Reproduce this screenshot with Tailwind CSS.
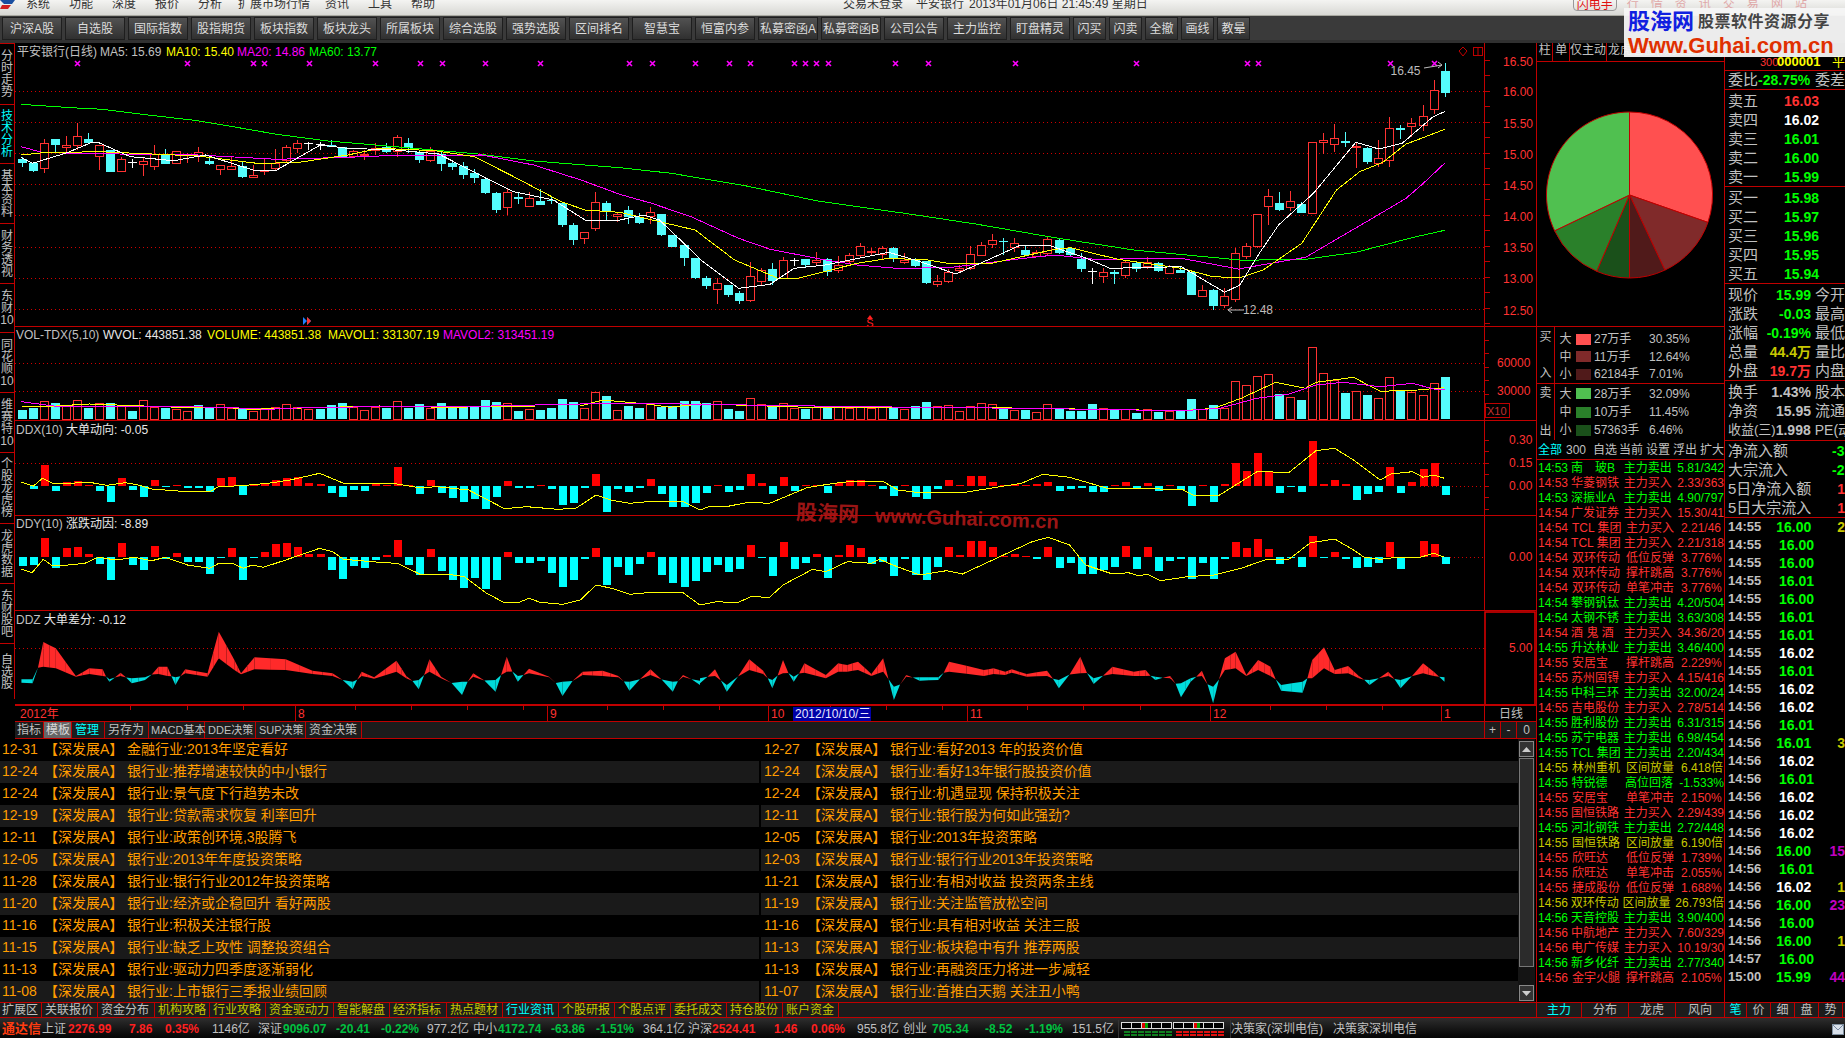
<!DOCTYPE html>
<html lang="zh">
<head>
  <meta charset="UTF-8" />
  <title>平安银行 日线</title>
  <script src="https://cdn.jsdelivr.net/npm/@tailwindcss/browser@4"></script>
</head>
<body class="bg-black">
<div class="relative w-[1845px] h-[1038px] overflow-hidden bg-black flex flex-col text-[12px] leading-[14px] text-[#c0c0c0] [font-family:'Liberation_Sans','Noto_Sans_CJK_SC',sans-serif]">

  <!-- title bar -->
  <div class="h-[16px] shrink-0 overflow-hidden bg-gradient-to-b from-[#f4f4f2] to-[#d8d8d4] text-[#333] flex items-start border-b border-[#a8a8a0]">
    <svg width="16" height="10" class="shrink-0"><path d="M0 0h15l-3 4H4z" fill="#1a4fa0"/><path d="M2 5h9l-3 4H0z" fill="#d02020"/></svg>
    <div class="flex -mt-[3px] pl-[10px]">
      <span class="w-[43px]">系统</span><span class="w-[43px]">功能</span><span class="w-[43px]">深度</span><span class="w-[43px]">报价</span><span class="w-[40px]">分析</span><span class="w-[87px]">扩展市场行情</span><span class="w-[43px]">资讯</span><span class="w-[43px]">工具</span><span class="w-[43px]">帮助</span>
    </div>
    <div class="flex -mt-[3px] ml-[389px]">
      <span class="w-[73px]">交易未登录</span><span class="w-[53px]">平安银行</span><span>2013年01月06日 21:45:49 星期日</span>
    </div>
    <div class="ml-[425px] -mt-[3px] w-[44px] h-[14px] border border-[#999] rounded-b-[4px] text-[#e01010] text-center text-[12px]">闪电手</div>
    <div class="flex -mt-[3px] ml-[10px] gap-[12px] text-[#e0a8a8]"><span>行</span><span>情</span><span>资</span><span>讯</span><span>交</span><span>易</span><span>网</span><span>站</span></div>
  </div>

  <!-- toolbar -->
  <div id="toolbar" class="h-[27px] shrink-0 bg-[#3a3a3a] flex items-start pt-[1px] pl-[2px] gap-[3px] border-b-[3px] border-[#303030]"></div>

  <div class="flex flex-1 min-h-0">
    <div class="w-[1536px] shrink-0 flex flex-col">
      <div class="flex h-[696px] shrink-0">
        <!-- left vertical tabs -->
        <div id="sideTabs" class="w-[15px] shrink-0 flex flex-col"></div>
        <!-- chart stack -->
        <div class="w-[1521px] flex flex-col">
          <div class="relative h-[284px] border-b border-[#c00000] overflow-hidden">
            <svg id="pMain" class="block" width="1521" height="284" viewBox="15 43 1521 284"></svg>
            <div class="absolute left-[2px] top-[2px] flex">
              <span class="w-[83px]">平安银行(日线)</span><span class="w-[66px]">MA5: 15.69</span><span class="w-[71px] text-[#ffff00]">MA10: 15.40</span><span class="w-[72px] text-[#ff00ff]">MA20: 14.86</span><span class="text-[#00ff00]">MA60: 13.77</span>
            </div>
          </div>
          <div class="relative h-[94px] border-b border-[#c00000] overflow-hidden">
            <svg id="pVol" class="block" width="1521" height="94" viewBox="15 327 1521 94"></svg>
            <div class="absolute left-[1px] top-[1px] flex">
              <span class="w-[87px]">VOL-TDX(5,10)</span><span class="w-[104px] text-[#e8e8e8]">WVOL: 443851.38</span><span class="w-[121px] text-[#ffff00]">VOLUME: 443851.38</span><span class="w-[115px] text-[#ffff00]">MAVOL1: 331307.19</span><span class="text-[#ff00ff]">MAVOL2: 313451.19</span>
            </div>
          </div>
          <div class="relative h-[95px] border-b border-[#c00000] overflow-hidden">
            <svg id="pDdx" class="block" width="1521" height="95" viewBox="15 421 1521 95"></svg>
            <div class="absolute left-[1px] top-[2px]"><span>DDX(10)</span> <span class="text-[#e8e8e8]">大单动向: -0.05</span></div>
          </div>
          <div class="relative h-[95px] border-b border-[#c00000] overflow-hidden">
            <svg id="pDdy" class="block" width="1521" height="95" viewBox="15 516 1521 95"></svg>
            <div class="absolute left-[1px] top-[1px]"><span>DDY(10)</span> <span class="text-[#e8e8e8]">涨跌动因: -8.89</span></div>
          </div>
          <div class="relative h-[95px] border-b-2 border-[#c00000] overflow-hidden">
            <svg id="pDdz" class="block" width="1521" height="95" viewBox="15 611 1521 95"></svg>
            <div class="absolute left-[1px] top-[2px]"><span>DDZ</span> <span class="text-[#e8e8e8]">大单差分: -0.12</span></div>
          </div>
          <div class="h-[16px] border-b border-[#c00000] overflow-hidden">
            <svg id="pAxis" class="block" width="1521" height="16" viewBox="15 707 1521 16"></svg>
          </div>
          <!-- template tabs -->
          <div class="h-[17px] bg-[#1c1c1c] border-b border-[#c00000] flex items-stretch">
            <span class="w-[29px] pl-[2px] pt-[1px] border-r border-[#c00000]">指标</span>
            <span class="w-[28px] pl-[2px] pt-[1px] bg-[#666] text-[#d8d8d8] border-r border-[#c00000]">模板</span>
            <span class="w-[33px] pl-[3px] pt-[1px] text-[#00ffff] border-r border-[#c00000]">管理</span>
            <span class="w-[44px] pl-[3px] pt-[1px] border-r border-[#c00000]">另存为</span>
            <span class="w-[56px] pl-[2px] pt-[1px] border-r border-[#c00000] whitespace-nowrap text-[11px]">MACD基本</span>
            <span class="w-[51px] pl-[3px] pt-[1px] border-r border-[#c00000] whitespace-nowrap text-[11px]">DDE决策</span>
            <span class="w-[50px] pl-[3px] pt-[1px] border-r border-[#c00000] whitespace-nowrap text-[11px]">SUP决策</span>
            <span class="w-[56px] pl-[3px] pt-[1px] border-r border-[#c00000]">资金决策</span>
            <span class="flex-1 border-r border-[#c00000]"></span>
            <span class="w-[16px] text-center pt-[1px] border-r border-[#c00000]">+</span>
            <span class="w-[16px] text-center pt-[1px] border-r border-[#c00000]">-</span>
            <span class="w-[19px] text-center pt-[1px]">0</span>
          </div>
        </div>
      </div>

      <!-- news -->
      <div class="h-[263px] shrink-0 flex overflow-hidden">
        <div id="news" class="w-[1518px] shrink-0 flex flex-col text-[14px] text-[#ff9c00]"></div>
        <div class="w-[17px] flex flex-col items-center pt-[2px] bg-[#141414]">
          <div class="w-[15px] h-[16px] bg-[#333] border border-[#888] flex items-center justify-center"><svg width="9" height="5"><path d="M4.5 0L9 5H0z" fill="#ccc"/></svg></div>
          <div class="w-[15px] h-[209px] mt-[1px] bg-[#2b2b2b] border border-[#777]"></div>
          <div class="flex-1"></div>
          <div class="w-[15px] h-[16px] mb-[1px] bg-[#333] border border-[#888] flex items-center justify-center"><svg width="9" height="5"><path d="M0 0H9L4.5 5z" fill="#ccc"/></svg></div>
        </div>
      </div>

      <!-- bottom tabs -->
      <div class="h-[16px] shrink-0 bg-[#1c1c1c] border-t border-b border-[#c00000] flex items-stretch overflow-hidden">
        <span class="w-[42px] pl-[2px] border-r border-[#c00000]">扩展区</span>
        <span class="w-[56px] pl-[3px] border-r border-[#c00000]">关联报价</span>
        <span class="w-[57px] pl-[3px] border-r border-[#c00000]">资金分布</span>
        <span class="w-[55px] pl-[3px] text-[#c8c800] border-r border-[#c00000]">机构攻略</span>
        <span class="w-[56px] pl-[3px] text-[#c8c800] border-r border-[#c00000]">行业攻略</span>
        <span class="w-[68px] pl-[3px] text-[#c8c800] border-r border-[#c00000]">资金驱动力</span>
        <span class="w-[56px] pl-[3px] text-[#c8c800] border-r border-[#c00000]">智能解盘</span>
        <span class="w-[57px] pl-[3px] text-[#c8c800] border-r border-[#c00000]">经济指标</span>
        <span class="w-[56px] pl-[3px] text-[#c8c800] border-r border-[#c00000]">热点题材</span>
        <span class="w-[56px] pl-[3px] text-[#00ffff] border-r border-[#c00000]">行业资讯</span>
        <span class="w-[56px] pl-[3px] text-[#c8c800] border-r border-[#c00000]">个股研报</span>
        <span class="w-[56px] pl-[3px] text-[#c8c800] border-r border-[#c00000]">个股点评</span>
        <span class="w-[56px] pl-[3px] text-[#c8c800] border-r border-[#c00000]">委托成交</span>
        <span class="w-[56px] pl-[3px] text-[#c8c800] border-r border-[#c00000]">持仓股份</span>
        <span class="w-[56px] pl-[3px] text-[#c8c800] border-r border-[#c00000]">账户资金</span>
      </div>
    </div>

    <!-- middle column -->
    <div class="w-[188px] shrink-0 border-l border-[#c00000] flex flex-col">
      <div class="h-[19px] shrink-0 border-b border-[#c00000] flex overflow-hidden whitespace-nowrap">
        <span class="w-[19px] text-center border-r border-[#c00000]">柱</span>
        <span class="w-[19px] text-center border-r border-[#c00000]">单</span>
        <span class="w-[38px] text-center border-r border-[#c00000]">仅主动</span>
        <span class="pl-[1px]">龙虎看盘(成交量按股)</span>
      </div>
      <div class="h-[265px] shrink-0 border-b border-[#c00000]"><svg id="pie" class="block" width="187" height="264"></svg></div>
      <div id="flowIn" class="h-[57px] shrink-0 border-b border-[#c00000] flex">
        <div class="w-[18px] border-r border-[#c00000] flex flex-col justify-between items-center py-[3px]"><span>买</span><span>入</span></div>
        <div class="flex-1 flex flex-col pt-[3px]">
          <div class="h-[19px] flex items-center"><span class="w-[21px] text-center">大</span><span class="w-[15px] h-[11px] bg-[#ff5050]"></span><span class="w-[58px] pl-[3px]">27万手</span><span>30.35%</span></div>
          <div class="h-[18px] flex items-center"><span class="w-[21px] text-center">中</span><span class="w-[15px] h-[11px] bg-[#802a2a]"></span><span class="w-[58px] pl-[3px]">11万手</span><span>12.64%</span></div>
          <div class="h-[18px] flex items-center"><span class="w-[21px] text-center">小</span><span class="w-[15px] h-[11px] bg-[#501a1a]"></span><span class="w-[58px] pl-[3px]">62184手</span><span>7.01%</span></div>
        </div>
      </div>
      <div id="flowOut" class="h-[56px] shrink-0 flex">
        <div class="w-[18px] border-r border-[#c00000] flex flex-col justify-between items-center py-[2px]"><span>卖</span><span>出</span></div>
        <div class="flex-1 flex flex-col">
          <div class="h-[19px] flex items-center"><span class="w-[21px] text-center">大</span><span class="w-[15px] h-[11px] bg-[#50c050]"></span><span class="w-[58px] pl-[3px]">28万手</span><span>32.09%</span></div>
          <div class="h-[18px] flex items-center"><span class="w-[21px] text-center">中</span><span class="w-[15px] h-[11px] bg-[#2a802a]"></span><span class="w-[58px] pl-[3px]">10万手</span><span>11.45%</span></div>
          <div class="h-[18px] flex items-center"><span class="w-[21px] text-center">小</span><span class="w-[15px] h-[11px] bg-[#1a501a]"></span><span class="w-[58px] pl-[3px]">57363手</span><span>6.46%</span></div>
        </div>
      </div>
      <div class="h-[20px] shrink-0 border-b border-[#c00000] flex items-center pl-[1px] pt-[1px] overflow-hidden whitespace-nowrap">
        <span class="w-[29px] text-[#00ffff]">全部</span><span class="w-[28px]">300</span><span class="w-[27px]">自选</span><span class="w-[28px]">当前</span><span class="w-[28px]">设置</span><span class="w-[28px]">浮出</span><span>扩大</span>
      </div>
      <div id="sigList" class="flex-1 min-h-0 pt-[1px] overflow-hidden"></div>
      <div class="h-[16px] shrink-0 bg-[#1c1c1c] border-t border-b border-[#c00000] flex text-center">
        <span class="w-[45px] text-[#00ffff] border-r border-[#c00000]">主力</span>
        <span class="w-[47px] border-r border-[#c00000]">分布</span>
        <span class="w-[47px] border-r border-[#c00000]">龙虎</span>
        <span class="w-[48px]">风向</span>
      </div>
    </div>

    <!-- right column -->
    <div class="w-[121px] shrink-0 border-l border-[#c00000] flex flex-col overflow-hidden whitespace-nowrap">
      <div class="h-[28px] shrink-0 border-b border-[#c00000] flex items-end pb-[1px] pl-[35px]">
        <span class="w-[17px] text-[#ff3232] text-[11px]">300</span><span class="w-[55px] text-[#ffff00] font-bold text-[13px]">000001</span><span class="text-[#ffff00] text-[13px]">平</span>
      </div>
      <div class="h-[19px] shrink-0 border-b border-[#c00000] flex items-center text-[15px]">
        <span class="ml-[3px] w-[39px]">委比</span><span class="w-[52px] text-right text-[#00ff00] font-bold text-[14px]">-28.75%</span><span class="ml-[5px]">委差</span>
      </div>
      <div id="sellBox" class="h-[97px] shrink-0 border-b border-[#c00000] pt-[1px] text-[15px]"></div>
      <div id="buyBox" class="h-[97px] shrink-0 border-b border-[#c00000] pt-[1px] text-[15px]"></div>
      <div class="h-[97px] shrink-0 border-b border-[#c00000] pt-[1px] text-[15px]">
        <div class="h-[19px] flex items-center"><span class="ml-[3px] w-[46px]">现价</span><span class="w-[45px] text-right font-bold text-[14px] text-[#00ff00]">15.99</span><span class="ml-[4px]">今开</span></div>
        <div class="h-[19px] flex items-center"><span class="ml-[3px] w-[46px]">涨跌</span><span class="w-[45px] text-right font-bold text-[14px] text-[#00ff00]">-0.03</span><span class="ml-[4px]">最高</span></div>
        <div class="h-[19px] flex items-center"><span class="ml-[3px] w-[46px]">涨幅</span><span class="w-[45px] text-right font-bold text-[14px] text-[#00ff00]">-0.19%</span><span class="ml-[4px]">最低</span></div>
        <div class="h-[19px] flex items-center"><span class="ml-[3px] w-[46px]">总量</span><span class="w-[45px] text-right font-bold text-[14px] text-[#c8c800]">44.4万</span><span class="ml-[4px]">量比</span></div>
        <div class="h-[19px] flex items-center"><span class="ml-[3px] w-[46px]">外盘</span><span class="w-[45px] text-right font-bold text-[14px] text-[#ff3232]">19.7万</span><span class="ml-[4px]">内盘</span></div>
      </div>
      <div class="h-[60px] shrink-0 border-b border-[#c00000] pt-[1px] text-[15px]">
        <div class="h-[19px] flex items-center"><span class="ml-[3px] w-[46px]">换手</span><span class="w-[45px] text-right font-bold text-[14px]">1.43%</span><span class="ml-[4px]">股本</span></div>
        <div class="h-[19px] flex items-center"><span class="ml-[3px] w-[46px]">净资</span><span class="w-[45px] text-right font-bold text-[14px]">15.95</span><span class="ml-[4px]">流通</span></div>
        <div class="h-[19px] flex items-center"><span class="ml-[3px] w-[48px] text-[13px]">收益(三)</span><span class="w-[43px] text-right font-bold text-[14px]">1.998</span><span class="ml-[4px] text-[14px]">PE(动)</span></div>
      </div>
      <div class="h-[77px] shrink-0 border-b border-[#c00000] text-[15px]">
        <div class="h-[19px] flex items-center"><span class="ml-[3px] w-[104px]">净流入额</span><span class="font-bold text-[14px] text-[#00ff00]">-3</span></div>
        <div class="h-[19px] flex items-center"><span class="ml-[3px] w-[104px]">大宗流入</span><span class="font-bold text-[14px] text-[#00ff00]">-2</span></div>
        <div class="h-[19px] flex items-center"><span class="ml-[3px] w-[114px]">5日净流入额</span><span class="font-bold text-[14px] text-[#ff3232]">1</span></div>
        <div class="h-[19px] flex items-center"><span class="ml-[3px] w-[114px]">5日大宗流入</span><span class="font-bold text-[14px] text-[#ff3232]">1</span></div>
      </div>
      <div id="ticks" class="flex-1 min-h-0 overflow-hidden"></div>
      <div class="h-[16px] shrink-0 bg-[#1c1c1c] border-t border-b border-[#c00000] flex text-center">
        <span class="w-[22px] text-[#00ffff] border-r border-[#c00000]">笔</span>
        <span class="w-[24px] border-r border-[#c00000]">价</span>
        <span class="w-[24px] border-r border-[#c00000]">细</span>
        <span class="w-[24px] border-r border-[#c00000]">盘</span>
        <span class="w-[24px] border-r border-[#c00000]">势</span>
      </div>
    </div>
  </div>

  <!-- status bar -->
  <div class="h-[20px] shrink-0 pt-[2px] pl-[2px] bg-gradient-to-b from-[#2e2e2e] to-[#050505] flex items-center whitespace-nowrap">
    <span class="w-[40px] text-[13px] font-bold text-[#ff3c10]">通达信</span><span class="w-[26px]">上证</span><span class="w-[61px] font-bold text-[#ff2020]">2276.99</span><span class="w-[36px] font-bold text-[#ff2020]">7.86</span><span class="w-[47px] font-bold text-[#ff2020]">0.35%</span><span class="w-[46px]">1146亿</span>
    <span class="w-[25px]">深证</span><span class="w-[53px] font-bold text-[#00c040]">9096.07</span><span class="w-[45px] font-bold text-[#00c040]">-20.41</span><span class="w-[46px] font-bold text-[#00c040]">-0.22%</span><span class="w-[46px]">977.2亿</span>
    <span class="w-[25px]">中小</span><span class="w-[53px] font-bold text-[#00c040]">4172.74</span><span class="w-[45px] font-bold text-[#00c040]">-63.86</span><span class="w-[47px] font-bold text-[#00c040]">-1.51%</span><span class="w-[45px]">364.1亿</span>
    <span class="w-[24px]">沪深</span><span class="w-[62px] font-bold text-[#ff2020]">2524.41</span><span class="w-[37px] font-bold text-[#ff2020]">1.46</span><span class="w-[46px] font-bold text-[#ff2020]">0.06%</span><span class="w-[46px]">955.8亿</span>
    <span class="w-[29px]">创业</span><span class="w-[53px] font-bold text-[#00c040]">705.34</span><span class="w-[40px] font-bold text-[#00c040]">-8.52</span><span class="w-[47px] font-bold text-[#00c040]">-1.19%</span><span class="w-[46px]">151.5亿</span>
    <span class="w-[113px] h-[18px] border-l border-r border-[#333] pl-[2px] pt-[2px]"><svg id="meter" class="block" width="105" height="15"></svg></span>
    <span class="w-[102px]">决策家(深圳电信)</span><span>决策家深圳电信</span>
    <svg class="absolute right-[1px] bottom-[3px]" width="12" height="11"><rect x=".5" y=".5" width="11" height="10" fill="#d8e0ea" stroke="#8090a0"/><path d="M1 1l5 5 5-5" fill="none" stroke="#7888a0"/></svg>
  </div>

  <!-- watermarks -->
  <div class="absolute left-[1624px] top-[8px] w-[221px] h-[49px] bg-[#f6f6f6]/95 pl-[4px] pt-[1px]">
    <div class="flex items-center h-[26px]">
      <span class="w-[66px] text-[22px] leading-[24px] font-bold text-[#1020e0]">股海网</span>
      <span class="text-[16px] ml-[4px] leading-[20px] tracking-[0.5px] font-bold text-[#444]">股票软件资源分享</span>
    </div>
    <div class="text-[22px] leading-[22px] font-bold text-[#e03000]">Www.Guhai.com.cn</div>
  </div>
  <div class="absolute left-[796px] top-[504px] rotate-2 flex items-center text-[#b01818]/90 font-bold whitespace-nowrap">
    <span class="text-[21px] w-[79px] leading-[26px]">股海网</span><span class="text-[20px] leading-[26px]">www.Guhai.com.cn</span>
  </div>
</div>

<script>
// ---------- chrome ----------
const toolbar = ['沪深A股','自选股','国际指数','股指期货','板块指数','板块龙头','所属板块','综合选股','强势选股','区间排名','智慧宝','恒富内参','私募密函A','私募密函B','公司公告','主力监控','盯盘精灵','闪买','闪卖','全撤','画线','教晕'];
document.getElementById('toolbar').innerHTML = toolbar.map((t, i) => {
  const cls = i > 16 ? 'w-[33px]' : 'w-[60px]';
  return `<div class="${cls} h-[23px] shrink-0 flex items-center justify-center whitespace-nowrap bg-gradient-to-b from-[#525252] to-[#303030] border border-[#1e1e1e] text-[#dcdcdc]">${t}</div>`;
}).join('');

const side = [['分时走势',61],['技术分析',59],['基本资料',60],['财务透视',60],['东财10',49],['同花顺10',60],['维赛特10',60],['个股龙虎榜',71],['龙虎数据',60],['东财股吧',60],['自选股',56]];
document.getElementById('sideTabs').innerHTML = side.map(([t, h], i) => {
  const color = i === 1 ? 'text-[#00ffff]' : 'text-[#c0c0c0]';
  const chars = t.replace('10', '').split('').map(c => `<span>${c}</span>`).join('') + (t.endsWith('10') ? '<span class="text-[12px]">10</span>' : '');
  return `<div class="shrink-0 flex flex-col items-center justify-center border-t border-r border-[#c00000] leading-[12px] ${color}" style="height:${h}px">${chars}</div>`;
}).join('');

const news = [
  ['12-31','金融行业:2013年坚定看好','12-27','银行业:看好2013 年的投资价值'],
  ['12-24','银行业:推荐增速较快的中小银行','12-24','银行业:看好13年银行股投资价值'],
  ['12-24','银行业:景气度下行趋势未改','12-24','银行业:机遇显现 保持积极关注'],
  ['12-19','银行业:贷款需求恢复 利率回升','12-11','银行业:银行股为何如此强劲?'],
  ['12-11','银行业:政策创环境,3股腾飞','12-05','银行业:2013年投资策略'],
  ['12-05','银行业:2013年年度投资策略','12-03','银行业:银行行业2013年投资策略'],
  ['11-28','银行业:银行行业2012年投资策略','11-21','银行业:有相对收益 投资两条主线'],
  ['11-20','银行业:经济或企稳回升 看好两股','11-19','银行业:关注监管放松空间'],
  ['11-16','银行业:积极关注银行股','11-16','银行业:具有相对收益 关注三股'],
  ['11-15','银行业:缺乏上攻性 调整投资组合','11-13','银行业:板块稳中有升 推荐两股'],
  ['11-13','银行业:驱动力四季度逐渐弱化','11-13','银行业:再融资压力将进一步减轻'],
  ['11-08','银行业:上市银行三季报业绩回顾','11-07','银行业:首推白天鹅 关注丑小鸭']
];
document.getElementById('news').innerHTML = news.map((r, i) => {
  const bg = i % 2 ? 'bg-[#1a1a1a]' : 'bg-black';
  return `<div class="h-[22px] shrink-0 flex gap-[2px] leading-[21px] whitespace-nowrap">
    <div class="w-[759px] flex pl-[2px] ${bg}"><span class="w-[42px]">${r[0]}</span><span class="w-[83px]">【深发展A】</span><span>${r[1]}</span></div>
    <div class="w-[757px] flex pl-[3px] ${bg}"><span class="w-[43px]">${r[2]}</span><span class="w-[83px]">【深发展A】</span><span>${r[3]}</span></div>
  </div>`;
}).join('');

const signals = `14:53|南　玻B|主力卖出|5.81/342|g
14:53|华菱钢铁|主力买入|2.33/363|r
14:53|深振业A|主力卖出|4.90/797|g
14:54|广发证券|主力买入|15.30/41|r
14:54|TCL 集团|主力买入|2.21/46|r
14:54|TCL 集团|主力买入|2.21/318|r
14:54|双环传动|低位反弹|3.776%|r
14:54|双环传动|撑杆跳高|3.776%|r
14:54|双环传动|单笔冲击|3.776%|r
14:54|攀钢钒钛|主力卖出|4.20/504|g
14:54|太钢不锈|主力卖出|3.63/308|g
14:54|酒 鬼 酒|主力买入|34.36/20|r
14:55|升达林业|主力卖出|3.46/400|g
14:55|安居宝|撑杆跳高|2.229%|r
14:55|苏州固锝|主力买入|4.15/416|r
14:55|中科三环|主力卖出|32.00/24|g
14:55|吉电股份|主力买入|2.78/514|r
14:55|胜利股份|主力卖出|6.31/315|g
14:55|苏宁电器|主力卖出|6.98/454|g
14:55|TCL 集团|主力卖出|2.20/434|g
14:55|林州重机|区间放量|6.418倍|y
14:55|特锐德|高位回落|-1.533%|g
14:55|安居宝|单笔冲击|2.150%|r
14:55|国恒铁路|主力买入|2.29/439|r
14:55|河北钢铁|主力卖出|2.72/448|g
14:55|国恒铁路|区间放量|6.190倍|y
14:55|欣旺达|低位反弹|1.739%|r
14:55|欣旺达|单笔冲击|2.055%|r
14:55|捷成股份|低位反弹|1.688%|r
14:56|双环传动|区间放量|26.793倍|y
14:56|天音控股|主力卖出|3.90/400|g
14:56|中航地产|主力买入|7.60/329|r
14:56|电广传媒|主力买入|10.19/30|r
14:56|新乡化纤|主力卖出|2.77/340|g
14:56|金宇火腿|撑杆跳高|2.105%|r`.split('\n');
const sigColor = { g: 'text-[#00ff00]', r: 'text-[#ff3232]', y: 'text-[#c8c800]' };
document.getElementById('sigList').innerHTML = signals.map(l => {
  const [t, n, s, v, c] = l.split('|');
  return `<div class="h-[15px] flex whitespace-nowrap overflow-hidden pl-[1px] ${sigColor[c]}"><span class="w-[34px]">${t}</span><span class="w-[54px]">${n}</span><span class="w-[55px]">${s}</span><span>${v}</span></div>`;
}).join('');

const quoteRow = (l, p, c) => `<div class="h-[19px] flex items-center"><span class="ml-[3px] w-[46px]">${l}</span><span class="w-[45px] text-right font-bold text-[14px] ${c}">${p}</span></div>`;
const G = 'text-[#00ff00]', Rd = 'text-[#ff3232]', W = 'text-white';
document.getElementById('sellBox').innerHTML = quoteRow('卖五','16.03',Rd)+quoteRow('卖四','16.02',W)+quoteRow('卖三','16.01',G)+quoteRow('卖二','16.00',G)+quoteRow('卖一','15.99',G);
document.getElementById('buyBox').innerHTML = quoteRow('买一','15.98',G)+quoteRow('买二','15.97',G)+quoteRow('买三','15.96',G)+quoteRow('买四','15.95',G)+quoteRow('买五','15.94',G);

const ticks = [['14:55','16.00','2'],['14:55','16.00'],['14:55','16.00'],['14:55','16.01'],['14:55','16.00'],['14:55','16.01'],['14:55','16.01'],['14:55','16.02'],['14:55','16.01'],['14:55','16.02'],['14:56','16.02'],['14:56','16.01'],['14:56','16.01','3'],['14:56','16.02'],['14:56','16.01'],['14:56','16.02'],['14:56','16.02'],['14:56','16.02'],['14:56','16.00','15'],['14:56','16.01'],['14:56','16.02','1'],['14:56','16.00','23'],['14:56','16.00'],['14:56','16.00','1'],['14:57','16.00'],['15:00','15.99','44']];
document.getElementById('ticks').innerHTML = ticks.map(([t, p, v]) => {
  const pc = p === '16.02' ? 'text-white' : 'text-[#00ff00]';
  const vc = v && v.length > 1 ? 'text-[#c000c0]' : 'ml-[7px] text-[#c8c800]';
  return `<div class="h-[18px] flex items-center font-bold"><span class="ml-[3px] w-[51px] text-[13px]">${t}</span><span class="w-[57px] text-[14px] ${pc}">${p}</span><span class="text-[14px] ${vc}">${v || ''}</span></div>`;
}).join('');

// ---------- chart data ----------
// values below are y positions measured on 3x crops; x comes from the bar index
const X = i => Math.round(21.7 + i * 11.03);
const UP = '#ff3232', DN = '#54fcfc';
const candles = `c470,477,488,500 c485,488,513,515 r418,430,505,518 c418,418,435,455 r408,436,441,460 r370,408,437,450 c400,418,428,432 r435,437,470,510 c450,450,515,515 r470,478,515,515
w478,487,488,503 r475,485,494,527 r435,462,500,510 c447,462,491,491 r453,455,491,493 r458,462,463,490 r440,458,468,485 c470,483,492,495 r495,496,508,525 r470,499,508,510
c482,498,531,533 r495,525,531,535 r475,510,514,525 r448,490,506,510 r435,442,482,490 r420,430,445,460 w425,430,431,450 w425,432,433,450 c420,436,442,442 c440,442,470,474
r450,455,470,472 r450,462,463,480 r430,445,452,465 c430,441,455,458 r405,412,455,470 c415,430,443,460 c453,455,480,490 r442,453,480,487 c455,463,491,512 c483,489,500,510
c485,498,525,536 c508,520,533,548 c535,537,579,581 c575,580,630,638 r565,578,622,645 c578,591,596,613 r575,596,620,620 c568,603,614,615 c590,600,603,612 c605,608,675,682
c670,676,720,735 r697,698,716,732 r575,607,685,692 c602,610,633,660 r635,644,650,665
c618,630,652,673 c640,652,668,672 r622,637,650,673 c642,642,705,707 c705,705,741,742 c728,736,774,797 c774,774,834,836 c828,834,857,866 r835,850,868,912 c855,855,885,890
c873,878,903,911 r787,829,902,905 r805,812,845,857 c790,808,843,855 r772,781,835,838 w775,780,781,797 c777,777,795,800 r755,781,787,797 c775,778,816,827 r768,796,812,820
r760,767,785,790 r730,738,766,770 r745,754,758,767 r738,746,762,780 c740,744,776,785 r760,781,787,792 c775,778,797,800 c782,784,850,853 r825,845,853,860 r808,817,845,850
r795,806,812,820 r738,763,805,810 r725,736,765,767 r702,720,734,743 c715,723,727,765 r715,730,741,755 c735,750,765,765 r750,757,768,772 r708,718,760,765 c718,720,758,763
c740,743,765,770 c760,778,807,815 w803,812,813,852 r805,817,830,848 c810,816,821,852 r780,787,827,835 c785,790,807,815 r772,787,800,808 c785,790,812,815 r795,800,821,823
c798,810,818,820 c815,816,884,885 r855,871,890,892 c868,870,917,930 r865,889,917,925 r745,760,898,905
r730,740,770,776 r643,643,740,745 r568,590,620,675 c577,610,629,632 r573,604,623,632 c605,613,638,640 r425,427,640,642 r400,421,426,462 r372,415,433,456 c397,424,430,440
r430,438,442,503 c440,444,486,491 r420,475,491,500 r350,385,482,500 c375,385,391,418 r355,371,380,412 r315,350,376,392 r240,271,328,342 c190,213,278,290`.split(/\s+/);

const Z = { 1: [0, 2.53], 2: [620, 2.53], 3: [1240, 2.59], 8: [0, 2.24], 9: [700, 1.867] };
const pts = (z, s) => s.split(' ').map(p => { const [a, b] = p.split(','); return [(Z[z][0] + a / Z[z][1]).toFixed(1), (320 * (z > 3) + b / 3).toFixed(1)].join(','); }).join(' ');
const poly = (p, c) => `<polyline points="${p}" fill="none" stroke="${c}" stroke-width="1" shape-rendering="crispEdges"/>`;
const line = (x1, y1, x2, y2, c, extra = '') => `<line x1="${x1}" y1="${y1}" x2="${x2}" y2="${y2}" stroke="${c}" shape-rendering="crispEdges" ${extra}/>`;
const text = (x, y, s, c, size = 12, anchor = 'start') => `<text x="${x}" y="${y}" fill="${c}" font-size="${size}" text-anchor="${anchor}" font-family="Liberation Sans, Noto Sans CJK SC, sans-serif">${s}</text>`;
const GRID = 'stroke-dasharray="1 3"';
const RED = '#c00000';

// ---------- main chart ----------
let s = '';
[91, 122.5, 153.5, 184.5, 215.5, 247, 278, 309.5].forEach(y => s += line(15, y, 1484, y, '#d00000', GRID));
candles.forEach((c, i) => {
  const [hi, top, bot, lo] = c.slice(1).split(',').map(v => v / 3);
  const x = X(i), t = c[0];
  const col = t === 'r' ? UP : t === 'c' ? DN : '#ffffff';
  s += line(x + .5, hi, x + .5, lo, col);
  if (t === 'w') s += line(x - 4, top + .5, x + 5, top + .5, col);
  else if (t === 'c') s += `<rect x="${x - 4}" y="${top}" width="9" height="${Math.max(bot - top, 1)}" fill="${DN}" shape-rendering="crispEdges"/>`;
  else s += `<rect x="${x - 3.5}" y="${top}" width="8" height="${Math.max(bot - top, 1)}" fill="#000" stroke="${UP}" shape-rendering="crispEdges"/>`;
});
s += poly(pts(1, '53,313 180,323 260,328 375,345 500,362 550,372 700,403 830,423 1000,440 1210,462 1350,483 1568,503') + ' ' + pts(2, '130,520 320,558 500,603 720,640 900,672 1100,713 1300,750 1568,780') + ' ' + pts(3, '0,781 170,778 300,757 450,712 530,691'), '#00ff00');
s += poly(pts(1, '53,440 110,458 300,462 500,465 700,478 880,472 1000,466 1220,465 1350,495 1470,540 1568,583') + ' ' + pts(2, '80,610 180,650 300,715 380,748 520,780 600,795 700,805 830,803 1000,778 1100,765 1200,778 1420,775 1568,808') + ' ' + pts(3, '0,806 170,772 350,650 430,595 470,555 530,490'), '#ff00ff');
s += poly(pts(1, '53,465 110,458 250,455 500,468 650,490 750,488 880,465 960,445 1100,452 1200,470 1300,530 1420,605 1480,630 1568,637') + ' ' + pts(2, '100,665 190,690 290,780 400,835 450,835 600,790 680,775 780,780 830,790 940,790 1100,748 1140,743 1260,778 1420,805 1500,830 1568,833') + ' ' + pts(3, '60,810 160,730 250,570 310,515 370,487 430,432 470,415 530,388'), '#ffff00');
s += poly(pts(1, '53,472 82,490 170,458 230,428 250,428 330,470 440,482 520,465 640,510 700,510 810,435 880,445 1000,450 1110,462 1230,535 1300,575 1400,600 1480,660 1568,660') + ' ' + pts(2, '60,645 100,660 210,785 300,865 380,853 440,805 520,795 680,757 760,785 850,822 940,775 1010,737 1090,738 1180,775 1240,805 1420,800 1530,877 1568,855') + ' ' + pts(3, '50,760 100,675 190,580 300,427 360,447 420,430 500,350 530,335'), '#ffffff');
// signal marks along the top
const marks = [196,474,641,669,783,950,1062,1117,1228,1367].map(x => x / 2.53).concat([24,80,191,275,330,441,469,497,525,695,778,1000,1306].map(x => 620 + x / 2.53), [19,47,389,502].map(x => 1240 + x / 2.59));
marks.forEach(x => { x = Math.round(x); s += `<path d="M${x - 2} 61l5 5m0-5l-5 5" stroke="#ff00ff" stroke-width="1.6"/>`; });
s += text(1390.5, 75, '16.45', '#bcbcbc', 12) + `<path d="M1424 68l18-3m-4-3l4 3-4 3" fill="none" stroke="#bcbcbc"/>`;
s += `<path d="M1244 310H1228m4-3l-4 3 4 3" fill="none" stroke="#bcbcbc"/>` + text(1243, 314, '12.48', '#bcbcbc', 12);
s += `<path d="M303 317l4 4-4 4zM307 317l4 4-4 4z" fill="#2080ff"/><path d="M307 317l4 4-4 4z" fill="#ff3030"/>`;
s += `<path d="M870 315l3 4h-6z" fill="#ff2020"/>` + text(870, 327, 'S', '#ff2020', 11, 'middle');
// toolbar glyphs in the chart's corner
s += `<path d="M1463 47l4 4-4 5-4-5z" fill="none" stroke="${RED}"/><rect x="1473.5" y="47.5" width="9" height="8" fill="none" stroke="${RED}"/><path d="M1478 47v8" stroke="${RED}"/>`;
s += line(1484.5, 43, 1484.5, 327, RED);
for (let y = 60; y < 325; y += 15.5) s += line(1484, y, 1490, y, RED);
[['16.50', 61], ['16.00', 91], ['15.50', 122.5], ['15.00', 153.5], ['14.50', 184.5], ['14.00', 215.5], ['13.50', 247], ['13.00', 278], ['12.50', 309.5]].forEach(([t, y]) => s += text(1503, y + 5, t, UP));
document.getElementById('pMain').innerHTML = s;

// ---------- volume ----------
const vol = `c270 c264 r244 c250 r258 r241 c264 r250 c250 r258 c273 r241 r262 c263 r268 r274 c255 c265 r254 r265 c267 r274 r265 r262 r254 r262 r268 c267 c254 c250 r262 r271 r262 c264 r244 c264 c253 r265 c250 c260 c260 c257 c240 c246 r250 c273 r268 c270 c264 c237 c246 r265 r217 c228 r271 c258 c263 r250 c262 c258 c243 c243
c250 r243 c267 c273 r235 r253 c262 r250 r265 c266 r262 c263 r258 r264 r262 r264 r258 c263 r268 c258 c246 r260 r257 r274 r258 r250 r254 c260 r270 c270 r277 r254 c264 c273 c273 c252 r265 c268 r268 c279 r268 c275 r275 c272 c237 r268 c255 r265 r184 r196 r169 r163 c223 r232 c240 r82 r160 r180 c219 r214 c225 r235 r172 c210 r217 r226 r190 c171`.split(/\s+/);
s = line(15, 363.5, 1484, 363.5, '#d00000', GRID) + line(15, 391, 1484, 391, '#d00000', GRID);
vol.forEach((v, i) => {
  const y = 320 + v.slice(1) / 3, x = X(i);
  if (v[0] === 'c') s += `<rect x="${x - 4}" y="${y}" width="9" height="${419 - y}" fill="${DN}" shape-rendering="crispEdges"/>`;
  else s += `<rect x="${x - 3.5}" y="${y}" width="8" height="${419 - y}" fill="#000" stroke="${UP}" shape-rendering="crispEdges"/>`;
});
s += poly(pts(8, '48,258 100,260 200,252 400,262 500,262 560,268 850,258 1000,262 1200,258 1300,258 1350,240 1450,252 1500,262 1568,252') + ' ' + pts(9, '0,252 50,254 200,262 500,262 900,272 960,265 1010,235 1075,187 1130,205 1150,187 1220,172 1270,214 1340,210 1390,203'), '#ffff00');
s += poly(pts(8, '48,245 120,258 300,258 500,262 600,268 700,262 1100,258 1300,252 1500,250 1568,255') + ' ' + pts(9, '0,253 300,260 600,265 900,272 970,265 1040,235 1100,222 1150,195 1200,187 1270,200 1330,190 1370,207 1390,207'), '#ff00ff');
s += line(1484.5, 327, 1484.5, 421, RED);
for (let y = 340; y < 420; y += 13.5) s += line(1484, y, 1489, y, RED);
s += text(1497, 367, '60000', UP) + text(1497, 395, '30000', UP);
s += `<rect x="1485.5" y="403.5" width="24" height="14" fill="none" stroke="${RED}"/>` + text(1487, 415, 'X10', '#c03030', 11);
document.getElementById('pVol').innerHTML = s;

// ---------- DDX / DDY bars ----------
function signedBars(list, base) {
  return list.trim().split(/\s+/).map((v, i) => {
    const y = 320 + v.slice(1) / 3, top = Math.min(y, base), h = Math.abs(y - base);
    return h < .5 ? '' : `<rect x="${X(i) - 3}" y="${top}" width="8" height="${Math.max(h, 1)}" fill="${v[0] === 'r' ? '#ff0000' : '#00ffff'}" shape-rendering="crispEdges"/>`;
  }).join('');
}
const ddx = `c498 c507 r435 c513 r486 r483 r495 c513 c545 r474 c510 c530 r480 c502 r496 c503 c503 c517 r474 r471 c525 r493 r490 r480 r474 r470 r490 r492 c519 c530 c510 c513 r492 r496 r441 r495 c522 r480 c519 c534 c545 c537 c567 c531 r484 c503 c503 r496 c507 c554 c549 c503 r462 c576 c507 c516 c503 r477 c522 c560 c560 c549
c519 r496 c515 c510 r462 r490 c522 r471 c513 r494 r495 c519 r488 r480 r480 r496 c507 c528 r496 c530 c537 c507 r480 r495 r468 r468 r486 r494 r492 r495 r492 r486 c513 c507 c503 c516 c516 r496 r486 c503 r490 c513 r496 c510 c557 r495 c546 r492 r428 r453 r400 r453 c519 c502 c516 r363 r491 r480 r491 c540 c522 c516 r441 c519 r486 r447 r428 c525`;
s = line(15, 463.5, 1484, 463.5, '#d00000', GRID) + line(1420, 486.5, 1484, 486.5, '#d00000', GRID) + signedBars(ddx, 486);
s += poly(pts(8, '48,487 75,498 95,475 120,492 200,487 240,496 280,488 310,495 340,507 420,515 470,515 490,500 540,497 600,490 650,480 716,460 770,490 880,490 940,503 980,500 1050,510 1100,545 1130,566 1180,560 1250,568 1290,565 1335,525 1370,541 1410,550 1450,545 1530,545 1568,570') + ' ' + pts(9, '0,570 20,558 55,558 90,547 130,550 200,503 250,490 290,483 340,483 370,510 410,518 490,518 600,490 640,463 690,472 760,505 900,508 920,525 970,525 1040,455 1100,457 1150,392 1185,385 1220,420 1270,480 1290,462 1330,455 1350,472 1370,465 1390,475'), '#ffff00');
s += line(1484.5, 421, 1484.5, 516, RED);
for (let y = 440; y < 510; y += 11.5) s += line(1484, y, 1489, y, RED);
s += text(1509, 444, '0.30', UP) + text(1509, 467, '0.15', UP) + text(1509, 490, '0.00', UP);
document.getElementById('pDdx').innerHTML = s;

const ddy = `c737 c735 r654 c744 r684 r681 r702 c732 c779 r669 c735 c750 r678 c718 r700 c726 c726 c762 c714 r684 c779 c714 r696 r672 r669 r681 r702 r702 c750 c776 c738 c744 c720 r705 r660 c735 c765 r687 c753 c780 c804 c774 c807 c780 r696 c729 c729 c723 c759 c801 c780 c717 r684 c795 c741 c765 c732 r696 c765 c789 c801 c783
c755 c735 c755 c747 r675 c714 c767 r666 c747 c729 r702 c774 r705 r675 r684 c732 c726 c767 c716 c765 c780 c741 r681 r705 r663 r663 r681 r708 r702 r708 c717 r681 c744 c729 c762 c762 c750 c741 r678 c747 r681 c753 c723 c717 c777 c729 c777 c717 r666 r684 r657 r687 c732 c714 c741 r648 c714 r696 c717 c744 c741 c729 r666 c747 c714 r663 r672 c732`;
s = line(1450, 557.5, 1484, 557.5, '#d00000', GRID) + signedBars(ddy, 557.3);
s += poly(pts(8, '48,748 72,758 97,718 115,735 130,738 190,730 220,712 260,720 300,712 340,722 370,712 420,735 470,745 490,730 520,730 545,745 565,735 590,742 640,720 716,685 745,695 770,718 860,728 890,730 940,762 1000,762 1040,770 1090,820 1130,848 1160,848 1185,835 1210,847 1260,853 1300,840 1335,795 1370,805 1410,823 1450,818 1530,818 1568,855') + ' ' + pts(9, '0,855 30,845 70,848 95,830 130,832 155,795 210,748 235,755 275,725 320,730 335,718 360,735 410,765 460,752 490,762 620,665 650,652 690,675 720,735 770,762 800,758 820,768 835,762 860,782 910,770 960,765 1010,745 1060,717 1100,717 1140,668 1185,657 1220,690 1240,712 1270,718 1300,712 1340,714 1370,700 1390,712'), '#ffff00');
s += line(1484.5, 516, 1484.5, 611, RED) + text(1509, 561, '0.00', UP);
document.getElementById('pDdy').innerHTML = s;

// ---------- DDZ band ----------
const band8 = '48,1078,1088 73,1078,1090 97,966,1040 125,985,1045 170,1068,1070 200,1045,1062 230,1048,1068 245,1078,1085 270,1058,1068 295,1075,1090 325,1072,1080 355,1040,1062 375,1040,1068 393,1072,1095 415,1048,1060 465,1060,1070 490,935,1015 525,1020,1050 540,1060,1063 570,1012,1048 640,1018,1050 700,1052,1062 745,1060,1068 790,1085,1108 810,1055,1068 838,1072,1076 888,1022,1055 910,1068,1075 938,1080,1108 962,1018,1055 988,1070,1075 1035,1085,1125 1060,1060,1070 1110,1080,1115 1135,1010,1055 1160,1068,1085 1185,1046,1060 1230,1070,1072 1260,1085,1128 1305,1055,1065 1350,1052,1068 1385,1068,1072 1410,1085,1112 1457,1048,1065 1507,1085,1115 1530,1065,1070 1568,1082,1095';
const band9 = '0,1075,1090 28,1048,1068 50,1095,1115 92,1018,1050 118,1052,1062 135,1080,1105 155,1020,1060 175,1070,1085 195,1030,1058 235,1065,1075 258,1030,1055 275,1035,1055 295,1025,1050 320,1062,1068 342,1015,1055 362,1100,1140 385,1065,1070 410,1072,1082 445,1072,1080 465,1025,1055 530,1050,1068 548,1045,1062 570,1055,1065 582,1048,1058 610,1062,1070 648,1052,1068 670,1080,1105 710,1010,1060 735,1075,1092 770,1040,1062 810,1055,1068 832,1050,1068 850,1070,1080 878,1068,1075 898,1090,1132 916,1075,1085 937,1052,1068 958,1100,1150 980,1015,1050 1000,995,1045 1020,1065,1068 1042,1020,1050 1065,1040,1068 1085,1095,1112 1125,1085,1118 1143,1020,1075 1165,982,1045 1185,1050,1062 1210,1038,1060 1230,1068,1075 1250,1080,1095 1285,1055,1068 1308,1080,1105 1350,1030,1060 1370,1055,1068 1390,1072,1085';
const toBand = (z, str) => str.split(' ').map(p => { const [a, u, l] = p.split(',').map(Number); return [Z[z][0] + a / Z[z][1], 320 + u / 3, 320 + l / 3, (u + l) / 2 >= 1075]; });
const band = toBand(8, band8).concat(toBand(9, band9));
s = line(15, 648.5, 1484, 648.5, '#d00000', GRID);
for (let i = 0; i < band.length - 1; i++) {
  const a = band[i], b = band[i + 1], mx = (a[0] + b[0]) / 2;
  let mu = (a[1] + b[1]) / 2, ml = (a[2] + b[2]) / 2;
  // the two lines cross where the colour changes, so the band pinches there
  if (a[3] !== b[3]) mu = ml = (mu + ml) / 2;
  s += `<polygon points="${a[0]},${a[1]} ${mx},${mu} ${mx},${ml} ${a[0]},${a[2]}" fill="${a[3] ? '#00dcdc' : '#ff2a2a'}"/>`;
  s += `<polygon points="${mx},${mu} ${b[0]},${b[1]} ${b[0]},${b[2]} ${mx},${ml}" fill="${b[3] ? '#00dcdc' : '#ff2a2a'}"/>`;
}
s += `<rect x="1485" y="612" width="50" height="94" fill="#000" stroke="#e00000" stroke-width="1.5"/>` + text(1509, 652, '5.00', UP);
document.getElementById('pDdz').innerHTML = s;

// ---------- date axis ----------
s = '';
[130, 187, 243, 355, 411, 467, 523, 607, 663, 719, 830, 886, 942, 1027, 1083, 1140, 1270, 1326, 1382].forEach(x => s += line(x, 707, x, 711, RED));
[[20, '2012年'], [298, '8'], [550, '9'], [771, '10'], [970, '11'], [1213, '12'], [1444, '1']].forEach(([x, t]) => {
  if (x > 20) s += line(x - 2.5, 707, x - 2.5, 723, RED);
  s += text(x, 719, t, UP);
});
s += `<rect x="793" y="708" width="78" height="14" fill="#0000a8"/>` + text(795, 719, '2012/10/10/三', '#e8e8ff', 12);
s += line(1484.5, 707, 1484.5, 723, RED) + text(1499, 719, '日线', '#c0c0c0', 12);
document.getElementById('pAxis').innerHTML = s;

// ---------- pie ----------
const slices = [[30.35, '#ff5050'], [12.64, '#802a2a'], [7.01, '#501a1a'], [6.46, '#1a501a'], [11.45, '#2a802a'], [32.09, '#50c050']];
let ang = 0;
const cx = 92.5, cy = 133, rad = 83;
document.getElementById('pie').innerHTML = slices.map(([p, c]) => {
  const a0 = ang / 100 * 2 * Math.PI; ang += p; const a1 = ang / 100 * 2 * Math.PI;
  const pt = a => `${(cx + rad * Math.sin(a)).toFixed(1)} ${(cy - rad * Math.cos(a)).toFixed(1)}`;
  return `<path d="M${cx} ${cy}L${pt(a0)}A${rad} ${rad} 0 ${p > 50 ? 1 : 0} 1 ${pt(a1)}Z" fill="${c}" stroke="${RED}"/>`;
}).join('');

// ---------- status meter ----------
let m = '';
[0, 52].forEach((ox, j) => {
  m += `<rect x="${ox + .5}" y=".5" width="50" height="6" fill="#000" stroke="#ddd"/>`;
  for (let i = 1; i < 5; i++) m += `<path d="M${ox + i * 10 + .5} 0v7" stroke="#ddd"/>`;
  m += `<rect x="${ox + 21}" y="1" width="3" height="5" fill="#e00000"/><rect x="${ox + 24}" y="1" width="3" height="5" fill="#00a000"/>`;
  for (let r = 0; r < 2; r++) for (let i = 0; i < 7; i++) m += `<rect x="${ox + 3 + i * 7}" y="${9 + r * 3}" width="6" height="2" fill="${j ? '#e01010' : '#108020'}"/>`;
});
document.getElementById('meter').innerHTML = m;
</script>
</body>
</html>
